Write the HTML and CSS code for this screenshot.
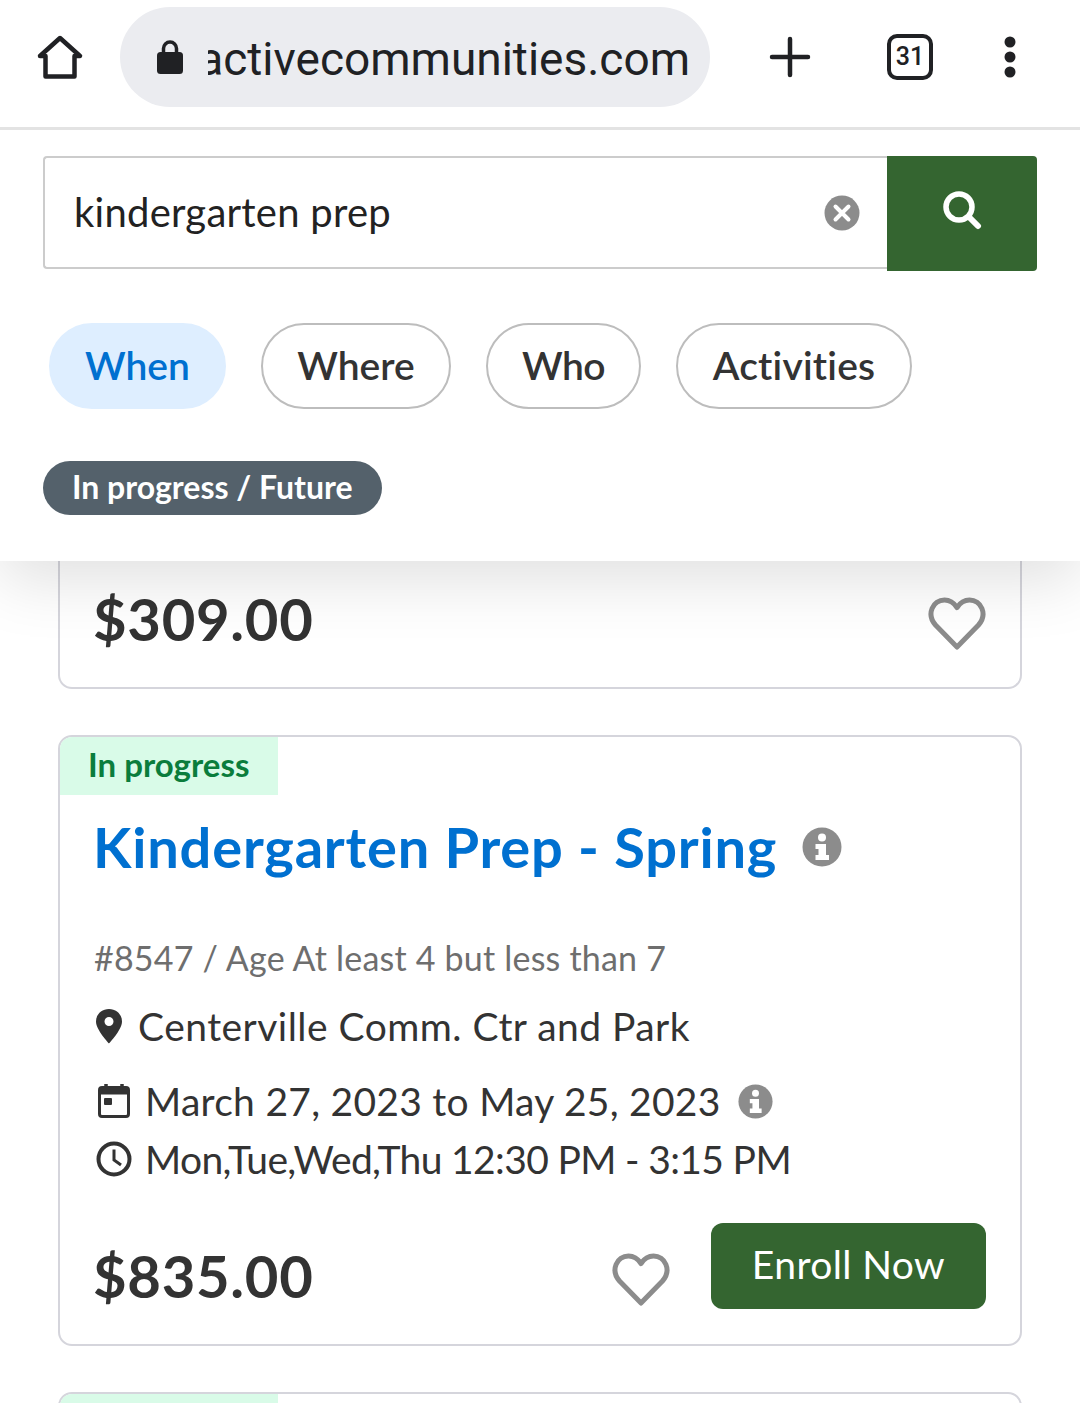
FILE: index.html
```html
<!DOCTYPE html>
<html>
<head>
    <title>Activity search</title>
    <link rel="stylesheet" href="styles.css">
</head>
<body>
    <div class="toolbar">
        <svg class="tool-home" width="48" height="48" viewBox="0 0 48 48"><path d="M24 5 L44 23 H38.500 V43.500 H9.500 V23 H4 Z" fill="none" stroke="#202124" stroke-width="4.500" stroke-linejoin="round"/></svg>
        <div class="address">
            <svg width="28" height="36" viewBox="0 0 28 36"><path d="M7.500 14 V9.500 a6.500 6.500 0 0 1 13 0 V14" fill="none" stroke="#202124" stroke-width="3.500"/><rect x="1" y="13" width="26" height="22" rx="3.500" fill="#202124"/></svg>
            <div class="address-text"><span>activecommunities.com</span></div>
        </div>
        <svg class="tool-plus" width="42" height="42" viewBox="0 0 42 42"><path d="M21 3 V39 M3 21 H39" stroke="#202124" stroke-width="4.500" stroke-linecap="round"/></svg>
        <div class="tab-count">31</div>
        <svg class="tool-menu" width="12" height="42" viewBox="0 0 12 42"><circle cx="6" cy="6" r="5.500" fill="#202124"/><circle cx="6" cy="21" r="5.500" fill="#202124"/><circle cx="6" cy="36" r="5.500" fill="#202124"/></svg>
    </div>

    <div class="search-panel">
        <div class="search-row">
            <div class="search-input">
                <span>kindergarten prep</span>
                <svg width="36" height="36" viewBox="0 0 36 36"><circle cx="18" cy="18" r="17.500" fill="#8c8c8c"/><path d="M11.500 11.500 L24.500 24.500 M24.500 11.500 L11.500 24.500" stroke="#fff" stroke-width="4" stroke-linecap="round"/></svg>
            </div>
            <div class="search-button">
                <svg width="40" height="40" viewBox="0 0 40 40"><circle cx="17" cy="17" r="13" fill="none" stroke="#fff" stroke-width="5.500"/><path d="M27 27 L36 36" stroke="#fff" stroke-width="6" stroke-linecap="round"/></svg>
            </div>
        </div>
        <div class="filters">
            <div class="pill pill-when">When</div>
            <div class="pill pill-where">Where</div>
            <div class="pill pill-who">Who</div>
            <div class="pill pill-activities">Activities</div>
        </div>
        <div class="status-chip">In progress / Future</div>
    </div>

    <div class="results">
        <div class="card card-cut">
            <div class="price-row">
                <div class="price">$309.00</div>
                <svg class="heart" width="58" height="54" viewBox="0 0 58 54"><path d="M29 50 L7.500 28 C-2 17 5 3 16.500 3 C22 3 26 6 29 10.500 C32 6 36 3 41.500 3 C53 3 60 17 50.500 28 Z" fill="none" stroke="#8c8c8c" stroke-width="5" stroke-linejoin="round"/></svg>
            </div>
        </div>

        <div class="card">
            <div class="tag">In progress</div>
            <div class="card-body">
                <div class="title-row">
                    <a class="title" href="#">Kindergarten Prep - Spring</a>
                    <svg width="40" height="40" viewBox="0 0 40 40"><circle cx="20" cy="20" r="19.500" fill="#8c8c8c"/><circle cx="20" cy="10.500" r="4" fill="#fff"/><path d="M13.500 17 H24 V28 H27 V33 H13.500 V28 H16.500 V22 H13.500 Z" fill="#fff"/></svg>
                </div>
                <div class="meta">#8547 / Age At least 4 but less than 7</div>
                <div class="line line-place">
                    <svg width="28" height="36" viewBox="0 0 28 36"><path fill-rule="evenodd" d="M14 1 C6.500 1 1 6.500 1 13.500 C1 22 14 35.500 14 35.500 C14 35.500 27 22 27 13.500 C27 6.500 21.500 1 14 1 Z M14 9 a4.500 4.500 0 1 1 0 9 a4.500 4.500 0 1 1 0 -9 Z" fill="#333"/></svg>
                    Centerville Comm. Ctr and Park
                </div>
                <div class="line line-date">
                    <svg width="32" height="36" viewBox="1 0 32 36"><path d="M9 1 V6 M25 1 V6" stroke="#333" stroke-width="3.500"/><rect x="2.500" y="4.500" width="29" height="29" rx="2.500" fill="none" stroke="#333" stroke-width="3"/><rect x="2.500" y="4.500" width="29" height="7" fill="#333"/><rect x="7" y="15" width="8" height="7" rx="1" fill="#333"/></svg>
                    March 27, 2023 to May 25, 2023
                    <svg class="date-info" width="35" height="35" viewBox="0 0 40 40"><circle cx="20" cy="20" r="19.500" fill="#8c8c8c"/><circle cx="20" cy="10.500" r="4" fill="#fff"/><path d="M13.500 17 H24 V28 H27 V33 H13.500 V28 H16.500 V22 H13.500 Z" fill="#fff"/></svg>
                </div>
                <div class="line line-time">
                    <svg width="36" height="36" viewBox="0 0 36 36"><circle cx="18" cy="18" r="15.500" fill="none" stroke="#333" stroke-width="4"/><path d="M18 8.500 V19 L25 24" fill="none" stroke="#333" stroke-width="3"/></svg>
                    Mon,Tue,Wed,Thu 12:30 PM - 3:15 PM
                </div>
                <div class="price-row price-row-enroll">
                    <div class="price">$835.00</div>
                    <svg class="heart" width="58" height="54" viewBox="0 0 58 54"><path d="M29 50 L7.500 28 C-2 17 5 3 16.500 3 C22 3 26 6 29 10.500 C32 6 36 3 41.500 3 C53 3 60 17 50.500 28 Z" fill="none" stroke="#8c8c8c" stroke-width="5" stroke-linejoin="round"/></svg>
                    <div class="enroll">Enroll Now</div>
                </div>
            </div>
        </div>

        <div class="card card-next">
            <div class="tag"></div>
        </div>
    </div>
</body>
</html>
```

FILE: styles.css
```css
body {
    margin: 0;
    height: 1403px;
    overflow: hidden;
    background-color: #fff;
    font-family: "Lato", "Open Sans", sans-serif;
    color: #333;
}
/* Browser bar */
.toolbar {
    position: relative;
    z-index: 6;
    height: 114px;
    padding-bottom: 13px;
    display: flex;
    align-items: center;
    background-color: #fff;
    border-bottom: 3px solid #e3e3e3;
}
.tool-home {
    margin-left: 36px;
    flex-shrink: 0;
}
.address {
    width: 590px;
    height: 100px;
    margin-left: 36px;
    background-color: #ebecf0;
    border-radius: 50px;
    display: flex;
    align-items: center;
    padding-left: 36px;
    padding-right: 20px;
    box-sizing: border-box;
}
.address-text {
    margin-left: 24px;
    padding-top: 4px;
    font-family: "Roboto", sans-serif;
    font-size: 46px;
    color: #202124;
    white-space: nowrap;
    overflow: hidden;
    flex: 1;
    display: flex;
    justify-content: flex-end;
}
.tool-plus {
    margin-left: 59px;
}
.tab-count {
    width: 38px;
    height: 38px;
    margin-left: 76px;
    border: 4px solid #202124;
    border-radius: 10px;
    font-family: "Roboto", sans-serif;
    font-weight: 500;
    font-size: 25px;
    line-height: 38px;
    text-align: center;
    color: #202124;
}
.tool-menu {
    margin-left: 71px;
}
/* Search panel */
.search-panel {
    position: relative;
    z-index: 5;
    height: 431px;
    padding: 26px 43px 0;
    box-sizing: border-box;
    background-color: #fff;
    box-shadow: 0 20px 60px rgba(0, 0, 0, 0.12);
}
.search-row {
    display: flex;
    width: 994px;
}
.search-input {
    flex: 1;
    height: 113px;
    display: flex;
    align-items: center;
    justify-content: space-between;
    padding: 0 27px 2px 29px;
    border: 2px solid #ccc;
    border-right: none;
    border-radius: 4px 0 0 4px;
    box-sizing: border-box;
    font-size: 40px;
    letter-spacing: 0.25px;
    color: #222;
}
.search-input svg {
    margin-bottom: -2px;
}
.search-button {
    width: 150px;
    height: 115px;
    background-color: #346530;
    border-radius: 0 4px 4px 0;
    display: flex;
    align-items: center;
    justify-content: center;
    padding-bottom: 8px;
    box-sizing: border-box;
}
.filters {
    display: flex;
    gap: 35px;
    margin-top: 52px;
    margin-left: 6px;
}
.pill {
    height: 86px;
    border: 2px solid #bdbdbd;
    border-radius: 43px;
    box-sizing: border-box;
    font-size: 39px;
    font-weight: 600;
    line-height: 80px;
    text-align: center;
    color: #333;
}
.pill-when {
    width: 177px;
    background-color: #deeeff;
    border-color: #deeeff;
    color: #0070d0;
}
.pill-where {
    width: 190px;
}
.pill-who {
    width: 155px;
    letter-spacing: -0.5px;
}
.pill-activities {
    width: 236px;
    letter-spacing: 0.2px;
}
.status-chip {
    display: inline-block;
    height: 54px;
    margin-top: 52px;
    padding: 0 29px;
    border-radius: 27px;
    background-color: #54616b;
    color: #fff;
    font-size: 32px;
    font-weight: 700;
    line-height: 52px;
}
/* Result cards */
.results {
    margin: 0 58px;
}
.card {
    border: 2px solid #d5d5dc;
    border-radius: 14px;
    margin-bottom: 46px;
    overflow: hidden;
    background-color: #fff;
}
.card-cut {
    height: 128px;
    border-top: none;
    border-radius: 0 0 14px 14px;
    box-sizing: border-box;
    padding: 31px 34px 0 35px;
    background-color: transparent;
}
.card-cut .price-row {
    align-items: flex-start;
}
.card-cut .heart {
    margin-top: 5px;
}
.card-next {
    height: 60px;
    margin-bottom: 0;
}
.card-next .tag {
    height: 60px;
}
.price-row {
    display: flex;
    align-items: center;
    justify-content: space-between;
}
.price {
    margin-left: -2px;
    font-size: 58px;
    font-weight: 700;
    letter-spacing: 0.7px;
    line-height: 54px;
    color: #333;
}
.tag {
    width: 218px;
    height: 58px;
    padding-left: 28px;
    box-sizing: border-box;
    background-color: #d9fbe8;
    color: #0a7d3c;
    font-size: 33px;
    font-weight: 700;
    line-height: 54px;
}
.card-body {
    padding: 18px 34px 35px 35px;
}
.title-row {
    display: flex;
    align-items: center;
    gap: 25px;
}
.title {
    margin-left: -2px;
    font-size: 56px;
    font-weight: 700;
    letter-spacing: 0.8px;
    color: #0070d0;
    text-decoration: none;
    line-height: 68px;
}
.meta {
    margin-top: 56px;
    margin-left: -1px;
    font-size: 34px;
    letter-spacing: 0.2px;
    color: #6e6e6e;
    line-height: 42px;
}
.line {
    display: flex;
    align-items: center;
    font-size: 39px;
    color: #333;
    line-height: 48px;
}
.line svg {
    flex-shrink: 0;
    margin-right: 14px;
}
.line-place {
    margin-top: 23px;
    letter-spacing: 0.47px;
}
.line-place svg {
    margin-right: 15px;
}
.line-date {
    margin-top: 27px;
    letter-spacing: 0.27px;
}
.line-date svg {
    margin-left: 3px;
    margin-right: 15px;
}
.line-date .date-info {
    margin-left: 17px;
    margin-right: 0;
}
.line-time {
    margin-top: 10px;
    letter-spacing: -0.65px;
}
.line-time svg {
    margin-left: 1px;
    margin-right: 13px;
}
.price-row-enroll {
    margin-top: 40px;
    align-items: flex-start;
}
.price-row-enroll .price {
    margin-top: 26px;
    flex: 1;
}
.price-row-enroll .heart {
    margin-top: 30px;
    margin-right: 41px;
}
.enroll {
    width: 275px;
    height: 86px;
    background-color: #346530;
    border-radius: 12px;
    color: #fff;
    font-size: 39px;
    letter-spacing: 0.4px;
    text-align: center;
    line-height: 83px;
}
```
